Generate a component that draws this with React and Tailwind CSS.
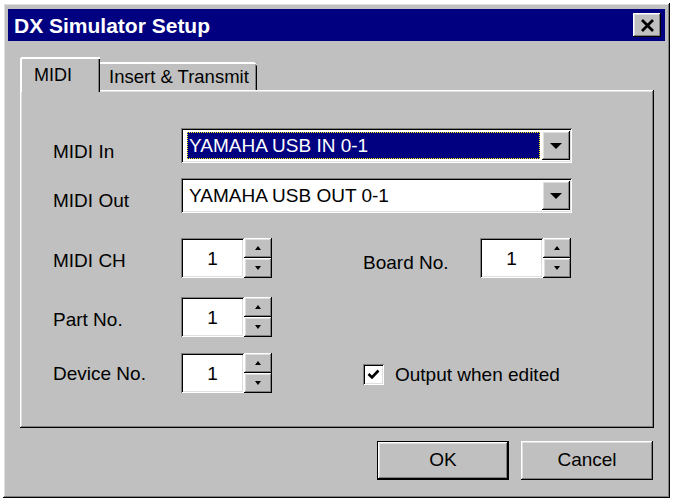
import React from 'react';

const raised =
  'shadow-[inset_-1px_-1px_#000,inset_1px_1px_#fff,inset_-2px_-2px_#808080,inset_2px_2px_#dfdfdf]';
const sunken =
  'shadow-[inset_1px_1px_#808080,inset_-1px_-1px_#fff,inset_2px_2px_#000,inset_-2px_-2px_#dfdfdf]';

function Arrow({ up, small }) {
  if (small) {
    return (
      <svg width="6" height="4" viewBox="0 0 6 4">
        <path d={up ? 'M3 0L6 4H0Z' : 'M0 0H6L3 4Z'} fill="#000" />
      </svg>
    );
  }
  return (
    <svg width="12" height="6" viewBox="0 0 12 6">
      <path d="M0 0H12L6 6Z" fill="#000" />
    </svg>
  );
}

function Combo({ value, selected }) {
  return (
    <div className={`w-[391px] h-[35px] bg-white flex items-stretch pl-[3px] pr-[2px] py-[3px] ${sunken}`}>
      <div className="flex-1 flex items-center pl-[3px] pr-[2px] py-[1px]">
        {selected ? (
          <div className="w-full h-full bg-[#000080] border border-dotted border-[#ffff00] flex items-center pl-[1px] text-white text-[19px] leading-none">
            {value}
          </div>
        ) : (
          <span className="pl-[2px] text-black text-[19px] leading-none">{value}</span>
        )}
      </div>
      <div className={`w-[28px] bg-[#c0c0c0] flex items-center justify-center ${raised}`}>
        <Arrow />
      </div>
    </div>
  );
}

function Spinner({ value }) {
  return (
    <div className="flex h-[40px]">
      <div className={`w-[63px] h-full bg-white flex items-center justify-center text-[19px] leading-none ${sunken}`}>
        {value}
      </div>
      <div className="w-[28px] flex flex-col">
        <div className={`h-[20px] bg-[#c0c0c0] flex items-center justify-center ${raised}`}>
          <Arrow up small />
        </div>
        <div className={`h-[20px] bg-[#c0c0c0] flex items-center justify-center ${raised}`}>
          <Arrow small />
        </div>
      </div>
    </div>
  );
}

function Label({ children, width, top }) {
  return (
    <div className={`${width} ${top} text-[19px] leading-[21px] text-black whitespace-nowrap`}>
      {children}
    </div>
  );
}

export default function App() {
  return (
    <div className="min-h-screen bg-white pt-[3px] pl-[3px]" style={{ fontFamily: '"Liberation Sans", Arial, sans-serif' }}>
      <div className={`w-[667px] h-[495px] bg-[#c0c0c0] flex flex-col px-[5px] pt-[6px] ${raised}`}>
        <div className="h-[32px] bg-[#000080] flex items-center justify-between pl-[6px] pr-[4px]">
          <span className="text-white font-bold text-[21px] leading-none">DX Simulator Setup</span>
          <button className={`w-[28px] h-[24px] bg-[#c0c0c0] flex items-center justify-center ${raised}`}>
            <svg width="15" height="13" viewBox="0 0 15 13">
              <path d="M2 1L13 12M13 1L2 12" stroke="#000" strokeWidth="2.8" />
            </svg>
          </button>
        </div>

        <div className="ml-[12px] mt-[16px] h-[33px] flex items-end">
          <div className="relative z-10 w-[80px] h-[35px] -mb-[2px] bg-[#c0c0c0] rounded-tl-[3px] shadow-[inset_2px_0_#fff,inset_0_2px_#fff,inset_-1px_0_#000,inset_-2px_0_#808080] pl-[14px] pt-[8px] text-[18px] leading-[21px]">
            MIDI
          </div>
          <div className="w-[157px] h-[28px] bg-[#c0c0c0] rounded-tr-[3px] shadow-[inset_0_2px_#fff,inset_-1px_0_#000,inset_-2px_0_#808080] pl-[9px] pt-[4px] text-[18.5px] leading-[21px] whitespace-nowrap">
            Insert &amp; Transmit
          </div>
        </div>

        <div className={`ml-[12px] w-[634px] h-[338px] pl-[33px] pt-[38px] ${raised}`}>
          <div className="flex h-[35px]">
            <Label width="w-[128px]" top="pt-[13px]">MIDI In</Label>
            <Combo value="YAMAHA USB IN 0-1" selected />
          </div>
          <div className="flex h-[35px] mt-[15px]">
            <Label width="w-[128px]" top="pt-[12px]">MIDI Out</Label>
            <Combo value="YAMAHA USB OUT 0-1" />
          </div>
          <div className="flex h-[40px] mt-[25px]">
            <Label width="w-[128px]" top="pt-[12px]">MIDI CH</Label>
            <Spinner value="1" />
            <div className="w-[91px]" />
            <Label width="w-[117px]" top="pt-[14px]">Board No.</Label>
            <Spinner value="1" />
          </div>
          <div className="flex h-[40px] mt-[19px]">
            <Label width="w-[128px]" top="pt-[12px]">Part No.</Label>
            <Spinner value="1" />
          </div>
          <div className="flex h-[40px] mt-[16px]">
            <Label width="w-[128px]" top="pt-[10px]">Device No.</Label>
            <Spinner value="1" />
            <div className="w-[91px]" />
            <div className="flex items-center gap-[11px] pt-[11px] self-start">
              <div className={`w-[21px] h-[21px] bg-white flex items-center justify-center ${sunken}`}>
                <svg width="13" height="11" viewBox="0 0 13 11">
                  <path d="M1.5 5L5 8.5L11.5 1.5" stroke="#000" strokeWidth="2.6" fill="none" />
                </svg>
              </div>
              <span className="text-[19px] leading-[21px]">Output when edited</span>
            </div>
          </div>
        </div>

        <div className="flex justify-end gap-[12px] mt-[13px] mr-[12px]">
          <button className="w-[132px] h-[39px] bg-black p-[1px]">
            <div className={`w-full h-full bg-[#c0c0c0] flex items-center justify-center text-[19px] ${raised}`}>
              OK
            </div>
          </button>
          <button className={`w-[132px] h-[39px] bg-[#c0c0c0] flex items-center justify-center text-[19px] ${raised}`}>
            Cancel
          </button>
        </div>
      </div>
    </div>
  );
}
